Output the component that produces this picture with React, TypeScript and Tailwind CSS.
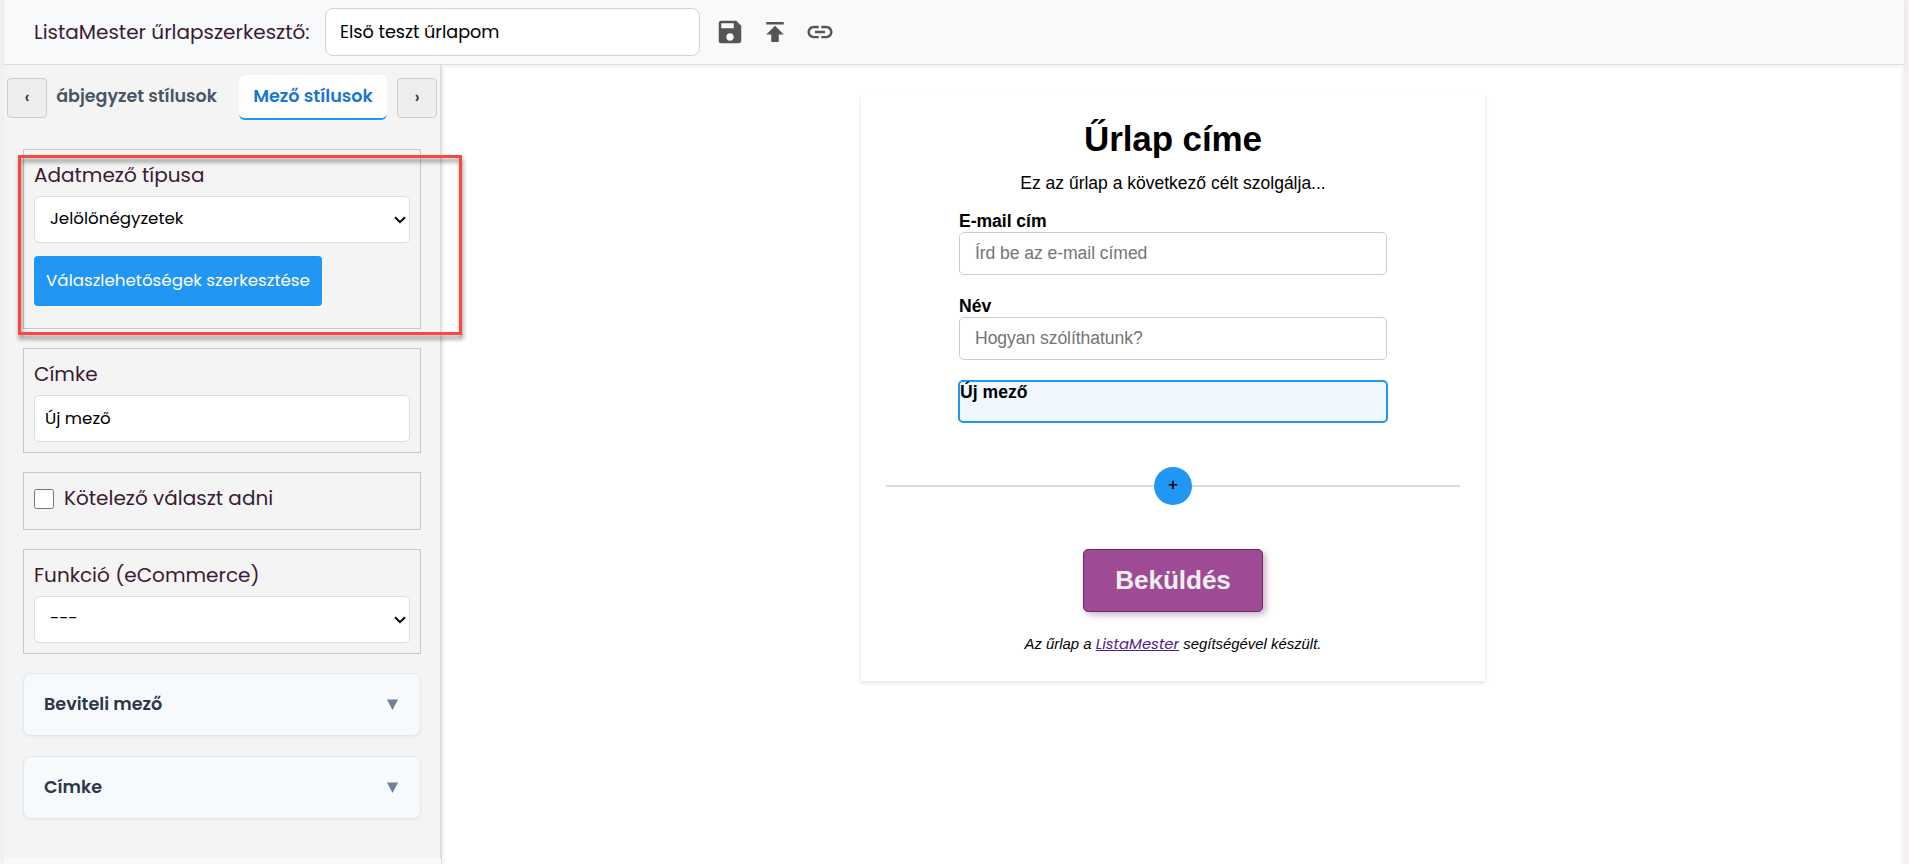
import React, { useState } from 'react';
import { MdLink, MdPublish, MdSave } from 'react-icons/md';

interface FieldBoxProps {
    label: string;
    className: string;
    children: React.ReactNode;
}

const FieldBox: React.FC<FieldBoxProps> = ({ label, className, children }) => (
    <div className={`border border-[#c8c8c8] px-2.5 pt-2.5 ${className}`}>
        <div className="h-[30px] mb-1.5 text-[20px] leading-[30px] whitespace-nowrap text-[#381c33]">{label}</div>
        {children}
    </div>
);

const SelectField: React.FC<{ value: string }> = ({ value }) => (
    <div className="relative">
        <select className="block h-[47px] w-full appearance-none rounded-[5px] border border-[#ddd] bg-white pb-0.5 pl-[15px] text-[16.7px] text-black">
            <option>{value}</option>
        </select>
        <svg viewBox="0 0 12 8" className="pointer-events-none absolute top-5 right-[4px] h-2 w-3">
            <path d="M1 1.2l5 5 5-5" fill="none" stroke="#000" strokeWidth="2" />
        </svg>
    </div>
);

const Accordion: React.FC<{ title: string }> = ({ title }) => (
    <div className="flex h-[63px] items-center justify-between rounded-lg border border-[#e2e8f0] bg-[#f7fafc] pl-5 pr-[22px] shadow-[0_1px_3px_rgba(0,0,0,0.05)]">
        <span className="text-[17.6px] font-semibold text-[#2d3748]">{title}</span>
        <svg viewBox="0 0 11 11" className="h-[11px] w-[11px]">
            <path d="M0 0.5h11L5.5 11z" fill="#718096" />
        </svg>
    </div>
);

const AppHeader: React.FC = () => {
    const [name, setName] = useState('Első teszt űrlapom');

    return (
        <header className="flex h-[65px] flex-shrink-0 items-center border-b border-[#d9dee5] bg-[#f8f9fb] pl-[30px] shadow-[0_2px_4px_rgba(0,0,0,0.08)]">
            <h1 className="w-[291px] text-[20px] whitespace-nowrap text-[#381c33]">ListaMester űrlapszerkesztő:</h1>
            <input
                value={name}
                onChange={(e) => setName(e.target.value)}
                className="h-12 w-[375px] rounded-lg border border-[#cfd4da] bg-white px-3.5 text-[17.6px] text-black"
            />
            <div className="ml-[15px] flex gap-[15px] text-[30px] text-[#555]">
                <button title="Mentés"><MdSave /></button>
                <button title="Közzététel"><MdPublish /></button>
                <button title="Hivatkozás"><MdLink /></button>
            </div>
        </header>
    );
};

const StyleTabs: React.FC = () => (
    <div className="flex h-[65px] pl-[3px] pr-[3px] pt-2.5">
        <button className="mt-[3px] h-10 w-10 rounded-[4px] border border-[#ccc] bg-[#eee] pb-0.5 text-[17.6px] font-medium text-[#333]">‹</button>
        <div className="ml-[9px] flex w-[331px] justify-end">
            <div className="flex h-[43px] shrink-0 items-center pr-[22px] text-[17.5px] font-semibold whitespace-nowrap text-[#4a5568]">ábjegyzet stílusok</div>
            <div className="flex h-[45px] w-[148px] shrink-0 items-center justify-center rounded-md border-b-2 border-[#2196f3] bg-white text-[17.6px] font-semibold whitespace-nowrap text-[#1976d2]">Mező stílusok</div>
        </div>
        <button className="mt-[3px] ml-2.5 h-10 w-10 rounded-[4px] border border-[#ccc] bg-[#eee] pb-0.5 text-[17.6px] font-medium text-[#333]">›</button>
    </div>
);

const Sidebar: React.FC = () => (
    <aside className="h-[793px] w-[438px] shrink-0 border-r-2 border-[#ddd] bg-[#f4f4f4]">
        <StyleTabs />
        <div className="flex flex-col gap-[19px] pt-[19px] pr-[19px] pl-[19px]">
            <FieldBox label="Adatmező típusa" className="h-[180px]">
                <SelectField value="Jelölőnégyzetek" />
                <button className="mt-[13px] h-[50px] w-[288px] rounded-[4px] bg-[#2196f3] text-[16.7px] whitespace-nowrap text-white">Válaszlehetőségek szerkesztése</button>
            </FieldBox>
            <FieldBox label="Címke" className="h-[105px]">
                <input defaultValue="Új mező" className="block h-[47px] w-full rounded-[5px] border border-[#ddd] bg-white px-2.5 pb-0.5 text-[16.7px] text-black" />
            </FieldBox>
            <label className="flex h-[58px] border border-[#c8c8c8] px-2.5 pt-2.5">
                <input type="checkbox" className="mt-1.5 mr-2.5 h-5 w-5" />
                <span className="text-[20px] leading-[30px] text-[#381c33]">Kötelező választ adni</span>
            </label>
            <FieldBox label="Funkció (eCommerce)" className="h-[105px]">
                <SelectField value="---" />
            </FieldBox>
            <div className="flex flex-col gap-5">
                <Accordion title="Beviteli mező" />
                <Accordion title="Címke" />
            </div>
        </div>
    </aside>
);

const FormPreview: React.FC = () => (
    <main className="mt-[3px] mr-[3px] flex-1 bg-white pt-[25px] font-['Liberation_Sans',Arial,sans-serif] text-black">
        <div className="mx-auto flex h-[588px] w-[624px] flex-col items-center bg-white px-[25px] pt-[25px] shadow-[0_2px_4px_rgba(0,0,0,0.12)]">
            <h2 className="text-[35px] leading-[42px] font-bold tracking-[-0.1px]">Űrlap címe</h2>
            <p className="mt-[13px] text-[17.5px] leading-5">Ez az űrlap a következő célt szolgálja...</p>
            <div className="mt-[18px] w-[428px] text-[17.6px]">
                <div className="h-[21px] leading-5 font-bold tracking-[-0.05px]">E-mail cím</div>
                <input placeholder="Írd be az e-mail címed" className="block h-[43px] w-full rounded-[5px] border border-[#ccc] px-[15px] tracking-[-0.08px] placeholder:text-[#757575]" />
                <div className="mt-[21px] h-[21px] leading-5 font-bold">Név</div>
                <input placeholder="Hogyan szólíthatunk?" className="block h-[43px] w-full rounded-[5px] border border-[#ccc] px-[15px] tracking-[-0.08px] placeholder:text-[#757575]" />
                <div className="-mx-px mt-5 h-[43px] rounded-[5px] border-2 border-[#2196f3] bg-[#f0f7ff] leading-5 font-bold">Új mező</div>
            </div>
            <div className="mt-[44px] flex w-full items-center">
                <div className="h-0.5 flex-1 bg-[#ddd]" />
                <button className="h-[38px] w-[38px] rounded-full bg-[#2196f3] pb-px font-['Poppins',Inter,sans-serif] text-[16px] leading-none font-medium">+</button>
                <div className="h-0.5 flex-1 bg-[#ddd]" />
            </div>
            <button className="mt-[44px] h-[63px] w-[180px] shrink-0 rounded-[5px] border border-[#6b2c66] bg-[#9f4a94] text-[26.2px] font-bold tracking-[-0.1px] text-[#eee] shadow-[3px_3px_6px_rgba(107,44,102,0.35)]">Beküldés</button>
            <p className="mt-[22px] text-[14.9px] leading-5 whitespace-nowrap italic">
                Az űrlap a <a className="font-['Poppins',Inter,sans-serif] text-[#551a8b] underline">ListaMester</a> segítségével készült.
            </p>
        </div>
    </main>
);

const App: React.FC = () => (
    <div className="relative h-[864px] w-full overflow-hidden bg-[#f3eff2] pr-[5px] pl-1 font-['Poppins',Inter,sans-serif]">
        <div className="flex h-full flex-col bg-[#f8f9fb]">
            <AppHeader />
            <div className="flex min-h-0 flex-1">
                <Sidebar />
                {/* pulled over the sidebar edge so its thin border runs on to the bottom */}
                <div className="-ml-px flex flex-1 border-l border-[#ddd] bg-[#f6f6f7] pl-[3px]">
                    <FormPreview />
                </div>
            </div>
        </div>
        {/* callout frame around the field type box */}
        <div className="pointer-events-none absolute top-[155px] left-[18px] h-[180px] w-[444px] border-3 border-[#ff4444] drop-shadow-[1px_4px_2px_rgba(0,0,0,0.45)]" />
    </div>
);

export default App;
